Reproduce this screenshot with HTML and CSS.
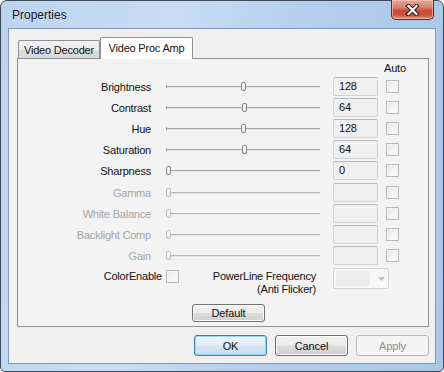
FILE: index.html
```html
<!DOCTYPE html>
<html>
<head>
<meta charset="utf-8">
<link rel="stylesheet" href="styles.css">
</head>
<body>
<div class="window">
  <div class="titlebar">
    <span class="title">Properties</span>
    <div class="close">
      <svg width="15" height="12" viewBox="0 0 15 12">
        <path d="M3.5 2 L11.5 10 M11.5 2 L3.5 10" stroke="#3b1712" stroke-width="4.4" stroke-linecap="square" fill="none"/>
        <path d="M3.5 2 L11.5 10 M11.5 2 L3.5 10" stroke="#ffffff" stroke-width="2.2" stroke-linecap="square" fill="none"/>
      </svg>
    </div>
  </div>
  <div class="client">
    <div class="tabs">
      <div class="tab">Video Decoder</div>
      <div class="tab active">Video Proc Amp</div>
    </div>
    <div class="panel">
      <div class="auto-row"><span class="auto">Auto</span></div>

      <div class="row">
        <span class="label">Brightness</span>
        <div class="slider"><div class="track"></div><div class="thumb" style="left:79px"></div></div>
        <div class="edit">128</div>
        <div class="chk"></div>
      </div>
      <div class="row">
        <span class="label">Contrast</span>
        <div class="slider"><div class="track"></div><div class="thumb" style="left:80px"></div></div>
        <div class="edit">64</div>
        <div class="chk"></div>
      </div>
      <div class="row">
        <span class="label">Hue</span>
        <div class="slider"><div class="track"></div><div class="thumb" style="left:79px"></div></div>
        <div class="edit">128</div>
        <div class="chk"></div>
      </div>
      <div class="row">
        <span class="label">Saturation</span>
        <div class="slider"><div class="track"></div><div class="thumb" style="left:80px"></div></div>
        <div class="edit">64</div>
        <div class="chk"></div>
      </div>
      <div class="row">
        <span class="label">Sharpness</span>
        <div class="slider"><div class="track"></div><div class="thumb" style="left:4px"></div></div>
        <div class="edit">0</div>
        <div class="chk"></div>
      </div>

      <div class="row disabled first-disabled">
        <span class="label">Gamma</span>
        <div class="slider"><div class="track"></div><div class="thumb" style="left:4px"></div></div>
        <div class="edit"></div>
        <div class="chk"></div>
      </div>
      <div class="row disabled">
        <span class="label">White Balance</span>
        <div class="slider"><div class="track"></div><div class="thumb" style="left:4px"></div></div>
        <div class="edit"></div>
        <div class="chk"></div>
      </div>
      <div class="row disabled">
        <span class="label">Backlight Comp</span>
        <div class="slider"><div class="track"></div><div class="thumb" style="left:4px"></div></div>
        <div class="edit"></div>
        <div class="chk"></div>
      </div>
      <div class="row disabled">
        <span class="label">Gain</span>
        <div class="slider"><div class="track"></div><div class="thumb" style="left:4px"></div></div>
        <div class="edit"></div>
        <div class="chk"></div>
      </div>

      <div class="extra">
        <span class="ce-label">ColorEnable</span>
        <div class="chk ce-chk"></div>
        <span class="pl-label">PowerLine Frequency<br>(Anti Flicker)</span>
        <div class="combo">
          <div class="combo-field"></div>
          <svg class="combo-arrow" width="7" height="4" viewBox="0 0 7 4"><path d="M0 0 H7 L3.5 4 Z" fill="#c4c4c4"/></svg>
        </div>
      </div>

      <div class="default-row">
        <button class="btn default-btn">Default</button>
      </div>
    </div>
    <div class="buttons">
      <button class="btn ok">OK</button>
      <button class="btn">Cancel</button>
      <button class="btn apply">Apply</button>
    </div>
  </div>
</div>
</body>
</html>
```

FILE: styles.css
```css
html, body {
  margin: 0;
  padding: 0;
  background: #ffffff;
}

body {
  width: 444px;
  height: 372px;
  overflow: hidden;
  font-family: "Liberation Sans", Arial, sans-serif;
  font-size: 11px;
  letter-spacing: -0.2px;
  color: #111;
}

.window {
  box-sizing: border-box;
  width: 444px;
  height: 372px;
  border: 1px solid #3f4a58;
  border-radius: 7px 7px 5px 5px;
  background: linear-gradient(100deg, #bcd4ee 0%, #c8ddf3 35%, #b4cfec 60%, #a9c6e6 100%);
  padding: 0 7px 7px 7px;
  display: flex;
  flex-direction: column;
}

.titlebar {
  height: 27px;
  display: flex;
  align-items: center;
}

.title {
  margin-left: 4px;
  font-size: 12px;
  letter-spacing: 0;
  color: #1a1a1a;
}

.close {
  margin-left: auto;
  margin-right: 2px;
  align-self: flex-start;
  margin-top: -1px;
  width: 43px;
  height: 20px;
  box-sizing: border-box;
  border: 1px solid #5c2a22;
  border-top: none;
  border-radius: 0 0 5px 5px;
  background: linear-gradient(#e6a79b 0%, #d9806f 40%, #c84b36 55%, #c9543e 80%, #e09a86 100%);
  box-shadow: inset 0 0 0 1px rgba(255, 210, 200, 0.55);
  display: flex;
  align-items: center;
  justify-content: center;
}

.client {
  flex: 1;
  box-sizing: border-box;
  background: #f0f0f0;
  border: 1px solid #7f9bbd;
  padding: 8px 0 0 8px;
}

.tabs {
  display: flex;
  align-items: flex-end;
  height: 21px;
}

.tab {
  box-sizing: border-box;
  width: 82px;
  height: 18px;
  margin-left: 1px;
  border: 1px solid #8d9097;
  border-bottom: none;
  border-radius: 2px 2px 0 0;
  background: linear-gradient(#f3f3f3 0%, #ebebeb 50%, #dedede 51%, #d8d8d8 100%);
  display: flex;
  align-items: center;
  justify-content: center;
  padding-top: 1px;
  white-space: nowrap;
  color: #151515;
}

.tab.active {
  width: 93px;
  height: 22px;
  margin-left: 0;
  margin-bottom: -1px;
  position: relative;
  z-index: 1;
  background: #ffffff;
  padding-top: 0;
  padding-bottom: 2px;
}

.panel {
  box-sizing: border-box;
  width: 412px;
  height: 269px;
  border: 1px solid #8d9097;
  background: #f3f3f3;
}

.auto-row {
  height: 17px;
  padding-top: 3px;
  box-sizing: border-box;
  padding-left: 366px;
  line-height: 13px;
}

.row {
  display: flex;
  align-items: center;
  height: 21px;
}

.row.first-disabled {
  margin-top: 1px;
}

.label {
  width: 133px;
  text-align: right;
  white-space: nowrap;
}

.row.disabled .label {
  color: #a3a3a3;
}

.slider {
  position: relative;
  width: 160px;
  height: 19px;
  margin-left: 11px;
}

.track {
  position: absolute;
  left: 4px;
  right: 2px;
  top: 9px;
  height: 1px;
  background: #a9a9a9;
  border-bottom: 1px solid #e4e4e4;
}

.track::before {
  content: "";
  position: absolute;
  left: 0;
  top: -1px;
  width: 1px;
  height: 3px;
  background: #9a9a9a;
}

.thumb {
  position: absolute;
  top: 5px;
  width: 5px;
  height: 9px;
  box-sizing: border-box;
  border: 1px solid #858585;
  border-radius: 2px;
  background: linear-gradient(#ffffff, #e8e8e8);
}

.row.disabled .thumb {
  border-color: #bdbdbd;
}

.row.disabled .track {
  background: #b8b8b8;
}

.edit {
  box-sizing: border-box;
  width: 45px;
  height: 19px;
  margin-left: 11px;
  border: 1px solid #cfd1d6;
  border-top-color: #b5b7bd;
  border-radius: 2px;
  background: #f0f0f0;
  padding-left: 5px;
  line-height: 17px;
  color: #111;
}

.chk {
  box-sizing: border-box;
  width: 13px;
  height: 13px;
  margin-left: 8px;
  border: 1px solid #b8b8b8;
  background: linear-gradient(135deg, #e4e4e4 0%, #f6f6f6 60%, #fdfdfd 100%);
  box-shadow: inset 0 0 0 1px #f4f4f4;
}

.extra {
  display: flex;
  align-items: flex-start;
  height: 30px;
}

.ce-label {
  width: 144px;
  text-align: right;
  margin-top: 4px;
  line-height: 13px;
  white-space: nowrap;
}

.chk.ce-chk {
  margin-left: 4px;
  margin-top: 4px;
}

.pl-label {
  width: 137px;
  text-align: right;
  margin-top: 4px;
  line-height: 13px;
  white-space: nowrap;
}

.combo {
  box-sizing: border-box;
  width: 56px;
  height: 21px;
  margin-left: 17px;
  margin-top: 2px;
  border: 1px solid #d2d2d2;
  border-radius: 2px;
  background: #f7f7f7;
  display: flex;
  align-items: center;
  padding: 2px;
}

.combo-field {
  width: 34px;
  height: 15px;
  background: #ececec;
}

.combo-arrow {
  margin-left: 8px;
}

.default-row {
  padding-left: 174px;
  margin-top: 8px;
}

.btn {
  box-sizing: border-box;
  width: 73px;
  height: 21px;
  padding: 0;
  margin: 0;
  font-family: "Liberation Sans", Arial, sans-serif;
  font-size: 11px;
  letter-spacing: -0.1px;
  color: #111;
  border: 1px solid #707070;
  border-radius: 3px;
  background: linear-gradient(#f2f2f2 0%, #ebebeb 48%, #dddddd 52%, #cfcfcf 100%);
  box-shadow: inset 0 0 0 1px #fbfbfb;
}

.btn.default-btn {
  height: 18px;
  line-height: 14px;
}

.buttons {
  width: 412px;
  margin-top: 8px;
  display: flex;
  justify-content: flex-end;
  gap: 8px;
}

.btn.ok {
  border-color: #3c7fb1;
  background: linear-gradient(#eef5fa 0%, #e3eef6 48%, #d5e5f0 52%, #cadeec 100%);
  box-shadow: inset 0 0 0 1px #9fd6f2;
}

.btn.apply {
  border-color: #b5b9bc;
  background: #f4f4f4;
  color: #8c8c8c;
  box-shadow: none;
}
```
